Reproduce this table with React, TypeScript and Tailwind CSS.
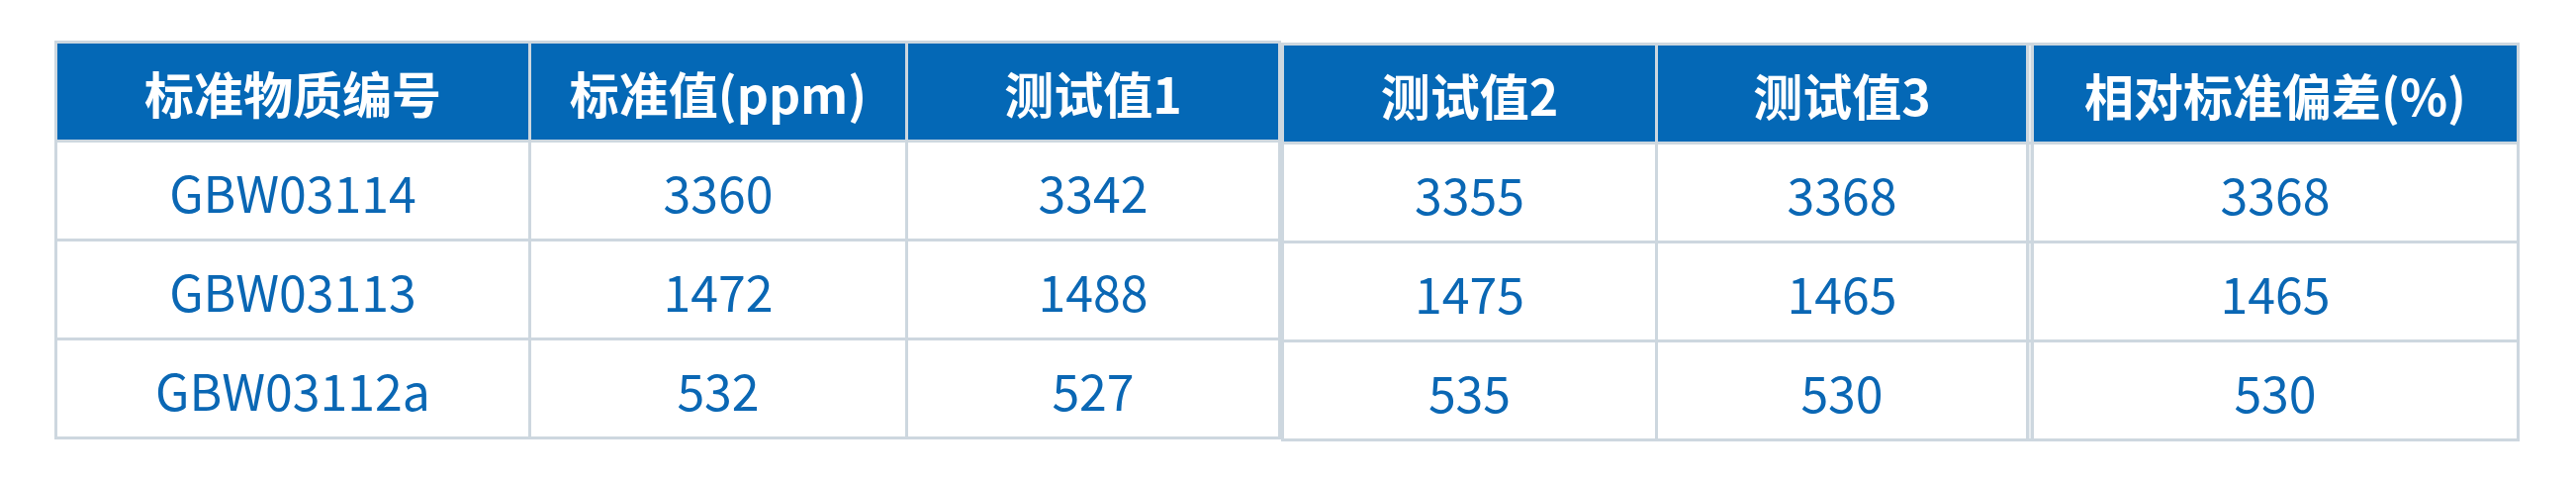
import React from "react";

const FONT = { fontFamily: '"Noto Sans CJK SC", "Noto Sans", sans-serif' };

const leftHead = ["标准物质编号", "标准值(ppm)", "测试值1"];
const leftRows = [
  ["GBW03114", "3360", "3342"],
  ["GBW03113", "1472", "1488"],
  ["GBW03112a", "532", "527"],
];
const rightRows = [
  ["3355", "3368", "3368"],
  ["1475", "1465", "1465"],
  ["535", "530", "530"],
];

function Head({ children }: { children: React.ReactNode }) {
  return (
    <div className="flex h-[97px] items-center justify-center bg-[#0468b6] text-[50px] font-bold leading-none text-white">
      {children}
    </div>
  );
}

function Cell({ children }: { children: React.ReactNode }) {
  return (
    <div className="flex h-[97px] items-center justify-center bg-white text-[50px] font-normal leading-none text-[#0a67b4]">
      {children}
    </div>
  );
}

function Strip() {
  return <div className="bg-[#e8edf1]" />;
}

export default function App() {
  return (
    <div className="min-h-[488px] w-[2604px] bg-white pl-[55px] pt-[41px]" style={FONT}>
      <div className="flex items-start">
        <div className="grid grid-cols-[476px_378px_374px] gap-[3px] bg-[#cdd7df] p-[3px]">
          {leftHead.map((h) => (
            <Head key={h}>{h}</Head>
          ))}
          {leftRows.map((r, i) =>
            r.map((c, j) => <Cell key={`${i}-${j}`}>{c}</Cell>)
          )}
        </div>
        <div className="mt-[2px] grid grid-cols-[375px_372px_2px_488px] gap-[3px] bg-[#cdd7df] p-[3px]">
          <Head>测试值2</Head>
          <Head>测试值3</Head>
          <Strip />
          <Head>相对标准偏差(%)</Head>
          {rightRows.map((r, i) => (
            <React.Fragment key={i}>
              <Cell>{r[0]}</Cell>
              <Cell>{r[1]}</Cell>
              <Strip />
              <Cell>{r[2]}</Cell>
            </React.Fragment>
          ))}
        </div>
      </div>
    </div>
  );
}
